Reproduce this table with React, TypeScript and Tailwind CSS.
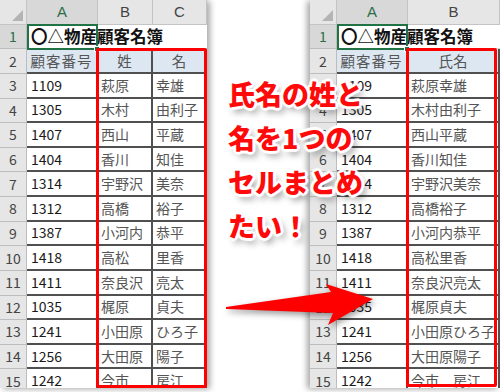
const LEFT_ROWS = [
  ["1109", "萩原", "幸雄"],
  ["1305", "木村", "由利子"],
  ["1407", "西山", "平蔵"],
  ["1404", "香川", "知佳"],
  ["1314", "宇野沢", "美奈"],
  ["1312", "高橋", "裕子"],
  ["1387", "小河内", "恭平"],
  ["1418", "高松", "里香"],
  ["1411", "奈良沢", "亮太"],
  ["1035", "梶原", "貞夫"],
  ["1241", "小田原", "ひろ子"],
  ["1256", "大田原", "陽子"],
  ["1242", "今市", "房江"],
];

const RIGHT_ROWS = LEFT_ROWS.map(([no, sei, mei]) => [
  no,
  no === "1242" ? `${sei}　${mei}` : sei + mei,
]);

const FONT = "font-['Noto_Sans_CJK_JP','Noto_Sans',sans-serif]";

function Sheet({
  widths,
  letters,
  labels,
  rows,
}: {
  widths: string[];
  letters: string[];
  labels: string[];
  rows: string[][];
}) {
  return (
    <div className={`flex flex-col ${FONT}`}>
      {/* column letters */}
      <div className="flex h-[24.64px]">
        <div className={`${widths[0]} shrink-0 relative bg-[#e6e6e6] border-r border-b border-[#c4c4c4]`}>
          <div className="absolute right-[3px] bottom-[3px] w-0 h-0 border-l-[11px] border-l-transparent border-b-[11px] border-b-[#b4b4b4]" />
        </div>
        {letters.map((l, i) => (
          <div
            key={l}
            className={`${widths[i + 1]} shrink-0 flex items-center justify-center text-[15px] font-['Liberation_Sans',sans-serif] border-r border-b border-[#c4c4c4] ${
              i === 0 ? "bg-[#d8d8d8] text-[#2b6e4a]" : "bg-[#e6e6e6] text-[#444]"
            }`}
          >
            {l}
          </div>
        ))}
      </div>

      {/* row 1: title */}
      <div className="flex h-[24.64px] relative">
        <div className={`${widths[0]} shrink-0 flex items-center justify-center bg-[#d8d8d8] text-[#2b6e4a] text-[14px] border-r border-b border-[#bdbdbd]`}>
          1
        </div>
        <div className="flex-1 flex items-center pl-[4px] text-[16.5px] font-bold text-[#111] whitespace-nowrap border-b border-[#d6d6d6]">
          〇△物産顧客名簿
        </div>
        <div className="absolute left-[27px] top-[-1px] w-[71px] h-[26px] border-2 border-[#217346]">
          <div className="absolute right-[-4px] bottom-[-4px] w-[6px] h-[6px] bg-[#217346] border border-white" />
        </div>
      </div>

      {/* row 2: labels */}
      <div className="flex h-[24.64px]">
        <div className={`${widths[0]} shrink-0 flex items-center justify-center bg-[#e6e6e6] text-[#444] text-[14px] border-r border-b border-[#bdbdbd]`}>
          2
        </div>
        {labels.map((l, i) => (
          <div
            key={l}
            className={`${widths[i + 1]} shrink-0 flex items-center justify-center bg-[#dde7f2] text-[#555] text-[14.5px] border-r-2 border-b-2 border-[#505050] ${
              i === 0 ? "tracking-[1px] border-r-[#c9d4e0]" : ""
            }`}
          >
            {l}
          </div>
        ))}
      </div>

      {/* data rows */}
      {rows.map((r, ri) => (
        <div key={ri} className="flex h-[24.64px]">
          <div className={`${widths[0]} shrink-0 flex items-center justify-center bg-[#e6e6e6] text-[#444] text-[14px] border-r border-b border-[#bdbdbd]`}>
            {ri + 3}
          </div>
          {r.map((c, ci) => (
            <div
              key={ci}
              className={`${widths[ci + 1]} shrink-0 flex items-center whitespace-nowrap overflow-hidden bg-white text-[14px] border-r-2 border-b-2 border-[#505050] ${
                ci === 0 ? "pl-[4px] text-[#1a1a1a]" : "pl-[3px] text-[#555]"
              }`}
            >
              {c}
            </div>
          ))}
        </div>
      ))}
    </div>
  );
}

export default function App() {
  return (
    <div className="relative w-[500px] h-[392px] overflow-hidden bg-white flex items-start">
      {/* left sheet */}
      <div className="relative w-[207px] h-[388px] shrink-0 overflow-hidden shadow-[3px_1px_6px_rgba(0,0,0,0.35)]">
        <Sheet
          widths={["w-[27px]", "w-[71px]", "w-[55px]", "w-[54px]"]}
          letters={["A", "B", "C"]}
          labels={["顧客番号", "姓", "名"]}
          rows={LEFT_ROWS}
        />
        <div className="absolute left-[96px] top-[48px] w-[111px] h-[340px] border-[3px] border-[#ff0000] rounded-[2px]" />
      </div>

      <div className="w-[103px] shrink-0" />

      {/* right sheet */}
      <div className="relative w-[190px] h-[388px] shrink-0 overflow-hidden shadow-[-3px_1px_6px_rgba(0,0,0,0.35)]">
        <Sheet
          widths={["w-[27px]", "w-[71px]", "w-[92px]"]}
          letters={["A", "B"]}
          labels={["顧客番号", "氏名"]}
          rows={RIGHT_ROWS}
        />
        <div className="absolute left-[96px] top-[48px] w-[91px] h-[339px] border-[3px] border-[#ff0000] rounded-[2px]" />
      </div>

      {/* caption */}
      <div
        className={`absolute left-[228px] top-[72px] text-[27px] leading-[44px] font-black text-[#ff0a0a] whitespace-nowrap ${FONT} [text-shadow:3px_0_1px_#fff,-3px_0_1px_#fff,0_3px_1px_#fff,0_-3px_1px_#fff,2px_2px_1px_#fff,-2px_-2px_1px_#fff,2px_-2px_1px_#fff,-2px_2px_1px_#fff,4px_5px_7px_rgba(0,0,0,0.45)]`}
      >
        <div>氏名の姓と</div>
        <div>名を1つの</div>
        <div>セルまとめ</div>
        <div>たい！</div>
      </div>

      {/* arrow */}
      <svg className="absolute left-0 top-0 w-[500px] h-[392px] pointer-events-none drop-shadow-[2px_3px_3px_rgba(0,0,0,0.4)]" viewBox="0 0 500 392">
        <polygon points="226,307 331,292 326,284 373,299 328,325 333,313 226,309" fill="#ff0000" />
      </svg>
    </div>
  );
}
